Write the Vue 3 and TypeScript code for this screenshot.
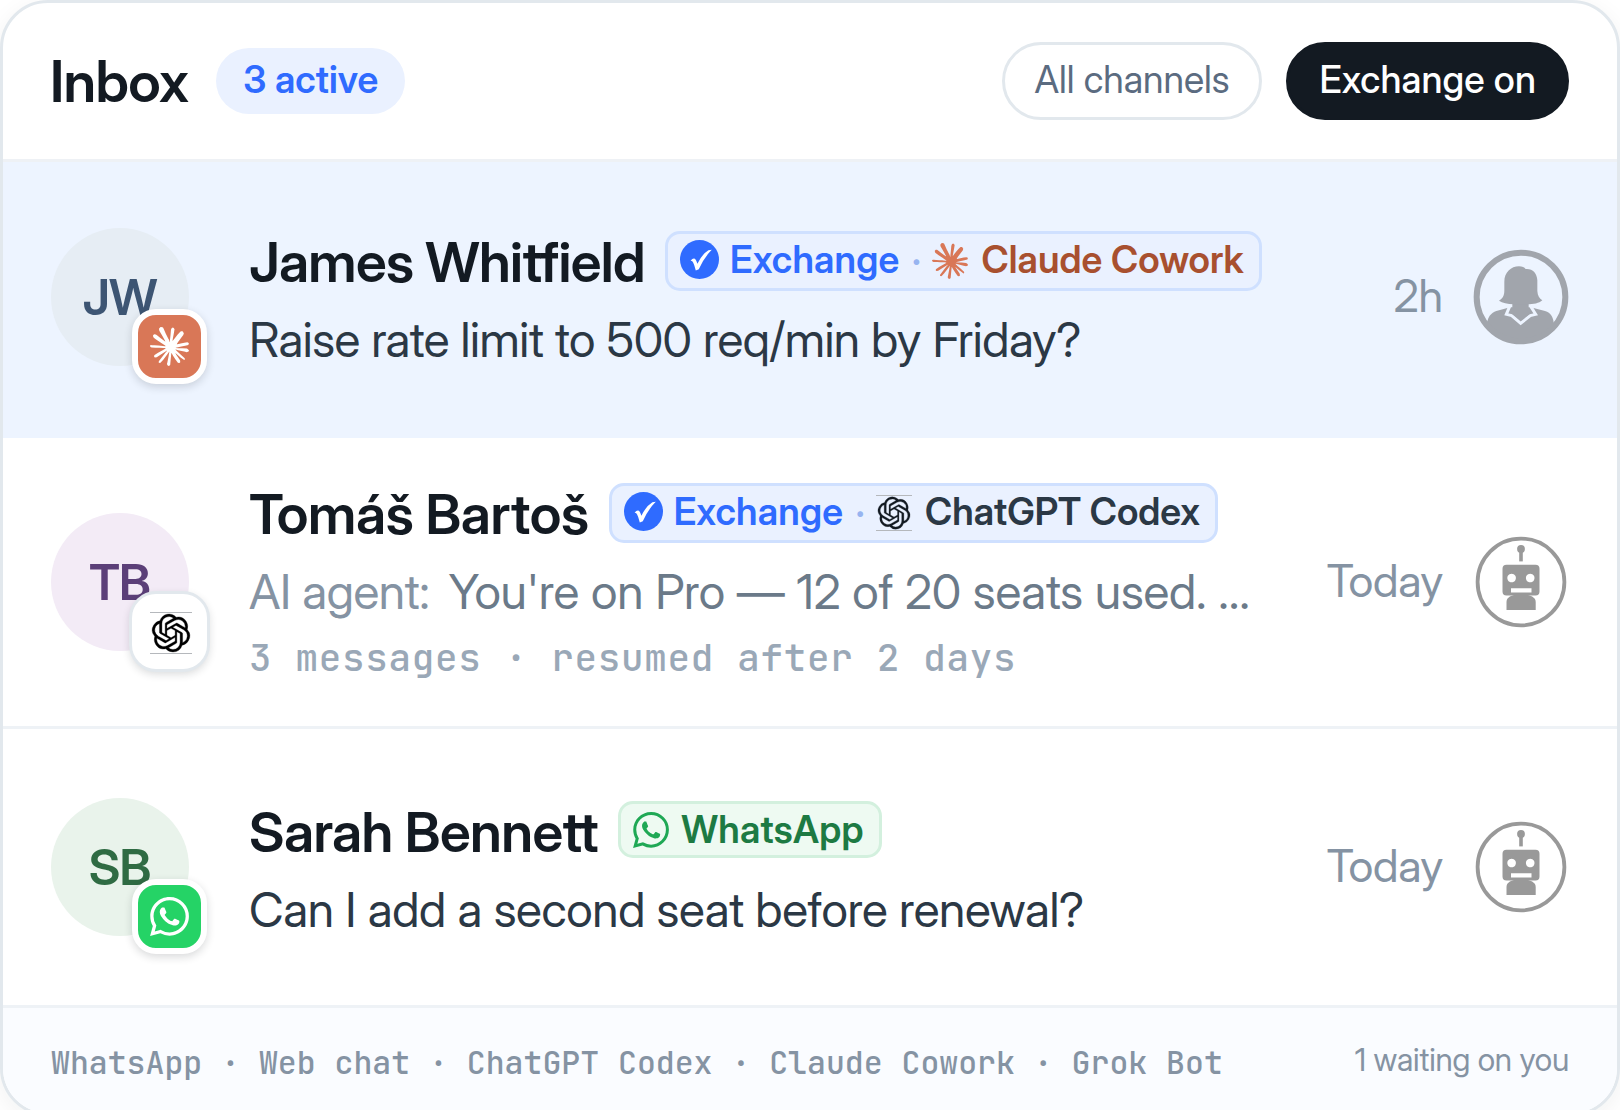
<script setup lang="ts">
type Channel = 'claude' | 'openai' | 'whatsapp'

interface Thread {
  id: number
  initials: string
  tone: string
  name: string
  channel: Channel
  label: string
  exchange: boolean
  sender?: string
  preview: string
  meta?: string
  time: string
  handler: 'human' | 'bot'
  selected?: boolean
}

const icons: Record<Channel, { box: string; d: string }> = {
  claude: {
    box: '0 0 24 24',
    d: 'm4.7144 15.9555 4.7174-2.6471.079-.2307-.079-.1275h-.2307l-.7893-.0486-2.6956-.0729-2.3375-.0971-2.2646-.1214-.5707-.1215-.5343-.7042.0546-.3522.4797-.3218.686.0608 1.5179.1032 2.2767.1578 1.6514.0972 2.4468.255h.3886l.0546-.1579-.1336-.0971-.1032-.0972L6.973 9.8356l-2.55-1.6879-1.3356-.9714-.7225-.4918-.3643-.4614-.1578-1.0078.6557-.7225.8803.0607.2246.0607.8925.686 1.9064 1.4754 2.4893 1.8336.3643.3035.1457-.1032.0182-.0728-.164-.2733-1.3539-2.4467-1.445-2.4893-.6435-1.032-.17-.6194c-.0607-.255-.1032-.4674-.1032-.7285L6.287.1335 6.6997 0l.9957.1336.419.3642.6192 1.4147 1.0018 2.2282 1.5543 3.0296.4553.8985.2429.8318.091.255h.1579v-.1457l.1275-1.706.2368-2.0947.2307-2.6957.0789-.7589.3764-.9107.7468-.4918.5828.2793.4797.686-.0668.4433-.2853 1.8517-.5586 2.9021-.3643 1.9429h.2125l.2429-.2429.9835-1.3053 1.6514-2.0643.7286-.8196.85-.9046.5464-.4311h1.0321l.759 1.1293-.34 1.1657-1.0625 1.3478-.8804 1.1414-1.2628 1.7-.7893 1.36.0729.1093.1882-.0183 2.8535-.607 1.5421-.2794 1.8396-.3157.8318.3886.091.3946-.3278.8075-1.967.4857-2.3072.4614-3.4364.8136-.0425.0304.0486.0607 1.5482.1457.6618.0364h1.621l3.0175.2247.7892.522.4736.6376-.079.4857-1.2142.6193-1.6393-.3886-3.825-.9107-1.3113-.3279h-.1822v.1093l1.0929 1.0686 2.0035 1.8092 2.5075 2.3314.1275.5768-.3218.4554-.34-.0486-2.2039-1.6575-.85-.7468-1.9246-1.621h-.1275v.17l.4432.6496 2.3436 3.5214.1214 1.0807-.17.3521-.6071.2125-.6679-.1214-1.3721-1.9246L14.38 17.959l-1.1414-1.9428-.1397.079-.674 7.2552-.3156.3703-.7286.2793-.6071-.4614-.3218-.7468.3218-1.4753.3886-1.9246.3157-1.53.2853-1.9004.17-.6314-.0121-.0425-.1397.0182-1.4328 1.9672-2.1796 2.9446-1.7243 1.8456-.4128.164-.7164-.3704.0667-.6618.4008-.5889 2.386-3.0357 1.4389-1.882.929-1.0868-.0062-.1579h-.0546l-6.3385 4.1164-1.1293.1457-.4857-.4554.0608-.7467.2307-.2429 1.9064-1.3114Z',
  },
  openai: {
    box: '-.65 -.65 25.3 25.3',
    d: 'M22.2819 9.8211a5.9847 5.9847 0 0 0-.5157-4.9108 6.0462 6.0462 0 0 0-6.5098-2.9A6.0651 6.0651 0 0 0 4.9807 4.1818a5.9847 5.9847 0 0 0-3.9977 2.9 6.0462 6.0462 0 0 0 .7427 7.0966 5.98 5.98 0 0 0 .511 4.9107 6.051 6.051 0 0 0 6.5146 2.9001A5.9847 5.9847 0 0 0 13.2599 24a6.0557 6.0557 0 0 0 5.7718-4.2058 5.9894 5.9894 0 0 0 3.9977-2.9001 6.0557 6.0557 0 0 0-.7475-7.0729zm-9.022 12.6081a4.4755 4.4755 0 0 1-2.8764-1.0408l.1419-.0804 4.7783-2.7582a.7948.7948 0 0 0 .3927-.6813v-6.7369l2.02 1.1686a.071.071 0 0 1 .038.052v5.5826a4.504 4.504 0 0 1-4.4945 4.4944zm-9.6607-4.1254a4.4708 4.4708 0 0 1-.5346-3.0137l.142.0852 4.783 2.7582a.7712.7712 0 0 0 .7806 0l5.8428-3.3685v2.3324a.0804.0804 0 0 1-.0332.0615L9.74 19.9502a4.4992 4.4992 0 0 1-6.1408-1.6464zM2.3408 7.8956a4.485 4.485 0 0 1 2.3655-1.9728V11.6a.7664.7664 0 0 0 .3879.6765l5.8144 3.3543-2.0201 1.1685a.0757.0757 0 0 1-.071 0l-4.8303-2.7865A4.504 4.504 0 0 1 2.3408 7.872zm16.5963 3.8558L13.1038 8.364 15.1192 7.2a.0757.0757 0 0 1 .071 0l4.8303 2.7913a4.4944 4.4944 0 0 1-.6765 8.1042v-5.6772a.79.79 0 0 0-.407-.667zm2.0107-3.0231l-.142-.0852-4.7735-2.7818a.7759.7759 0 0 0-.7854 0L9.409 9.2297V6.8974a.0662.0662 0 0 1 .0284-.0615l4.8303-2.7866a4.4992 4.4992 0 0 1 6.6802 4.66zM8.3065 12.863l-2.02-1.1638a.0804.0804 0 0 1-.038-.0567V6.0742a4.4992 4.4992 0 0 1 7.3757-3.4537l-.142.0805L8.704 5.459a.7948.7948 0 0 0-.3927.6813zm1.0976-2.3654l2.602-1.4998 2.6069 1.4998v2.9994l-2.5974 1.4997-2.6067-1.4997Z',
  },
  whatsapp: {
    box: '0 0 24 24',
    d: 'M17.472 14.382c-.297-.149-1.758-.867-2.03-.967-.273-.099-.471-.148-.67.15-.197.297-.767.966-.94 1.164-.173.199-.347.223-.644.075-.297-.15-1.255-.463-2.39-1.475-.883-.788-1.48-1.761-1.653-2.059-.173-.297-.018-.458.13-.606.134-.133.298-.347.446-.52.149-.174.198-.298.298-.497.099-.198.05-.371-.025-.52-.075-.149-.669-1.612-.916-2.207-.242-.579-.487-.5-.669-.51-.173-.008-.371-.01-.57-.01-.198 0-.52.074-.792.372-.272.297-1.04 1.016-1.04 2.479 0 1.462 1.065 2.875 1.213 3.074.149.198 2.096 3.2 5.077 4.487.709.306 1.262.489 1.694.625.712.227 1.36.195 1.871.118.571-.085 1.758-.719 2.006-1.413.248-.694.248-1.289.173-1.413-.074-.124-.272-.198-.57-.347m-5.421 7.403h-.004a9.87 9.87 0 01-5.031-1.378l-.361-.214-3.741.982.998-3.648-.235-.374a9.86 9.86 0 01-1.51-5.26c.001-5.45 4.436-9.884 9.888-9.884 2.64 0 5.122 1.03 6.988 2.898a9.825 9.825 0 012.893 6.994c-.003 5.45-4.437 9.884-9.885 9.884m8.413-18.297A11.815 11.815 0 0012.05 0C5.495 0 .16 5.335.157 11.892c0 2.096.547 4.142 1.588 5.945L.057 24l6.305-1.654a11.882 11.882 0 005.683 1.448h.005c6.554 0 11.89-5.335 11.893-11.893a11.821 11.821 0 00-3.48-8.413Z',
  },
}

const threads: Thread[] = [
  {
    id: 1,
    initials: 'JW',
    tone: 'slate',
    name: 'James Whitfield',
    channel: 'claude',
    label: 'Claude Cowork',
    exchange: true,
    preview: 'Raise rate limit to 500 req/min by Friday?',
    time: '2h',
    handler: 'human',
    selected: true,
  },
  {
    id: 2,
    initials: 'TB',
    tone: 'plum',
    name: 'Tomáš Bartoš',
    channel: 'openai',
    label: 'ChatGPT Codex',
    exchange: true,
    sender: 'AI agent:',
    preview: "You're on Pro — 12 of 20 seats used. …",
    meta: '3 messages · resumed after 2 days',
    time: 'Today',
    handler: 'bot',
  },
  {
    id: 3,
    initials: 'SB',
    tone: 'green',
    name: 'Sarah Bennett',
    channel: 'whatsapp',
    label: 'WhatsApp',
    exchange: false,
    preview: 'Can I add a second seat before renewal?',
    time: 'Today',
    handler: 'bot',
  },
]

const channels = ['WhatsApp', 'Web chat', 'ChatGPT Codex', 'Claude Cowork', 'Grok Bot'].join(' · ')
</script>

<template>
  <div class="stage">
    <section class="card">
      <header class="head">
        <h1 class="title">Inbox</h1>
        <span class="count">3 active</span>
        <div class="filters">
          <button class="pill">All channels</button>
          <button class="pill pill-dark">Exchange on</button>
        </div>
      </header>

      <article
        v-for="t in threads"
        :key="t.id"
        class="row"
        :class="['via-' + t.channel, { selected: t.selected }]"
      >
        <div class="avatar" :class="t.tone">
          <span class="initials">{{ t.initials }}</span>
          <span class="badge" :class="t.channel">
            <svg class="glyph" :viewBox="icons[t.channel].box"><path :d="icons[t.channel].d" /></svg>
          </span>
        </div>

        <div class="body">
          <div class="line">
            <span class="name">{{ t.name }}</span>
            <span class="tag" :class="'tag-' + t.channel">
              <template v-if="t.exchange">
                <svg class="check" viewBox="0 0 39 39">
                  <circle cx="19.5" cy="19.5" r="19.5" />
                  <path d="M10.6 20.8Q12.4 18.4 14.2 18.6Q16 19.2 17.4 23.8Q22 14.2 28.4 10.2L31.8 9.8Q23.8 17.8 18.8 29.2L15.8 30.4Q14.4 24.6 13 22.2Q12.2 20.8 10.6 20.8Z" />
                </svg>
                <span class="exchange">Exchange</span>
                <span class="dot">·</span>
              </template>
              <svg class="glyph" :viewBox="icons[t.channel].box"><path :d="icons[t.channel].d" /></svg>
              <span class="label">{{ t.label }}</span>
            </span>
          </div>
          <p class="preview" :class="{ muted: t.sender }">
            <span v-if="t.sender" class="sender">{{ t.sender }}</span>{{ t.preview }}
          </p>
          <p v-if="t.meta" class="meta">{{ t.meta }}</p>
        </div>

        <time class="time">{{ t.time }}</time>

        <svg v-if="t.handler === 'human'" class="handler" viewBox="-2 -2 288 288">
          <defs>
            <clipPath id="disc"><circle cx="142" cy="142" r="140" /></clipPath>
          </defs>
          <g fill="#a1a5ac">
            <g clip-path="url(#disc)">
              <path d="M40 284V219C44 200 52 190 68 184L112 172H168L214 184C232 190 238 202 240 219V284Z" />
            </g>
            <path d="M109 168L98 194L114 198L141 221L170 198L186 194L170 168Z" fill="none" stroke="#edf4ff" stroke-width="9" />
            <path d="M116 150H165V175L172 190L141 212L111 190L116 175Z" />
            <path d="M92 96C92 68 112 50 136 50C146 50 152 53 156 58C176 56 190 70 191 92V124C192 138 197 147 206 152C196 161 180 164 160 164H120C102 163 86 160 76 153C88 146 92 138 92 122Z" />
          </g>
          <circle cx="142" cy="142" r="133" fill="none" stroke="#a1a5ac" stroke-width="18" />
        </svg>
        <svg v-else class="handler" viewBox="0 0 96 96">
          <circle cx="48" cy="48" r="43.4" fill="none" stroke="#999" stroke-width="3.8" />
          <g fill="#999">
            <circle cx="48" cy="15" r="3.9" />
            <path d="M46.2 15h3.6v12.4h-3.6z" />
            <path fill-rule="evenodd" d="M33.5 30.8H62.5A4 4 0 0 1 66.5 34.8V57.5A4 4 0 0 1 62.5 61.5H33.5A4 4 0 0 1 29.5 57.5V34.8A4 4 0 0 1 33.5 30.8ZM38.6 39.7a4.3 4.3 0 1 0 .01 0ZM57.2 39.7a4.3 4.3 0 1 0 .01 0ZM38 54.3V58.5H58.5V54.3Z" />
            <path d="M33.5 76V68C33.5 64 37 62 41 61H55C59 62 62.7 64 62.7 68V76Z" />
          </g>
        </svg>
      </article>

      <footer class="foot">
        <span class="channels">{{ channels }}</span>
        <span class="waiting">1 waiting on you</span>
      </footer>
    </section>
  </div>
</template>

<style>
body {
  background: #fff;
}
</style>

<style scoped>
.stage {
  width: 1620px;
  height: 1110px;
  overflow: hidden;
  font-family: "Inter Display", Inter, "Liberation Sans", sans-serif;
  color: #131a22;
}
.card {
  box-sizing: border-box;
  height: 1116px;
  border: 3px solid #e2e8ed;
  border-radius: 48px;
  background: #fff;
  box-shadow: 0 6px 24px rgba(19, 26, 34, 0.06);
  overflow: hidden;
  display: flex;
  flex-direction: column;
}
.head {
  box-sizing: border-box;
  height: 159px;
  flex: none;
  padding: 0 48px;
  border-bottom: 3px solid #eef1f5;
  display: flex;
  align-items: center;
}
.title {
  margin: 2px 0 0 -1px;
  font-size: 57px;
  line-height: 66px;
  font-weight: 600;
  letter-spacing: -0.012em;
}
.count {
  margin-left: 28px;
  height: 66px;
  line-height: 64px;
  padding: 0 27px;
  border-radius: 33px;
  background: #eaf1ff;
  color: #2f6bff;
  font-size: 37.5px;
  font-weight: 600;
  letter-spacing: 0.1px;
}
.filters {
  margin-left: auto;
  display: flex;
  gap: 24px;
}
.pill {
  box-sizing: border-box;
  height: 78px;
  padding: 0 30px 2px;
  border: 3px solid #e2e8ed;
  border-radius: 39px;
  background: #fff;
  color: #5b6b80;
  font: 400 37.5px/70px "Inter Display", Inter, "Liberation Sans", sans-serif;
  letter-spacing: -0.05px;
}
.pill-dark {
  background: #131a22;
  border-color: #131a22;
  color: #fff;
  font-weight: 500;
  letter-spacing: 0.1px;
}
.row {
  box-sizing: border-box;
  height: 276px;
  flex: none;
  padding: 0 48px;
  display: flex;
  align-items: center;
}
.row.selected {
  background: #edf4ff;
  padding-bottom: 6px;
}
.row:nth-of-type(2) {
  height: 291px;
  border-bottom: 3px solid #eef2f6;
}
.avatar {
  position: relative;
  width: 138px;
  height: 138px;
  flex: none;
  border-radius: 50%;
  display: flex;
  align-items: center;
  justify-content: center;
  font-size: 49.5px;
  font-weight: 600;
  letter-spacing: -0.02em;
}
.initials { margin-right: 1px; }
.slate { background: #e6edf4; color: #3d5573; }
.plum { background: #f3ebf6; color: #5b3f78; }
.green { background: #e9f3eb; color: #2f6b43; }
.badge {
  position: absolute;
  right: -18px;
  bottom: -18px;
  box-sizing: border-box;
  width: 75px;
  height: 75px;
  border: 6px solid #fff;
  border-radius: 24px;
  display: flex;
  align-items: center;
  justify-content: center;
  box-shadow: 0 3px 9px rgba(19, 26, 34, 0.16);
}
.badge .glyph { width: 39px; height: 39px; fill: #fff; }
.badge.claude { background: #d97757; }
.badge.whatsapp { background: #25d366; }
.badge.openai {
  background: #fff;
  box-shadow: 0 0 0 3px #e2e8ed, 0 3px 9px 2px rgba(19, 26, 34, 0.16);
}
.badge.openai .glyph { width: 42px; height: 42px; margin: 2px 0 0 2px; fill: #000; stroke: #000; }
.openai .glyph, .tag-openai .glyph {
  box-sizing: border-box;
  border-top: 1px solid #b5b8bc;
  border-bottom: 1px solid #b5b8bc;
  stroke-width: 0.2;
}
.body {
  margin-left: 60px;
  flex: 1;
  min-width: 0;
}
.line {
  height: 70px;
  display: flex;
  align-items: center;
}
.name {
  margin-bottom: 2px;
  font-size: 55.5px;
  line-height: 70px;
  font-weight: 600;
  letter-spacing: -0.01em;
  white-space: nowrap;
}
.via-claude .name { letter-spacing: -0.012em; }
.via-openai .name { letter-spacing: -0.006em; }
.tag {
  box-sizing: border-box;
  height: 60px;
  margin: 0 0 3px 20px;
  padding: 0 15px 0 12px;
  border: 3px solid #cfe0ff;
  border-radius: 15px;
  background: #eaf1ff;
  display: flex;
  align-items: center;
  font-size: 37.5px;
  line-height: 51px;
  font-weight: 600;
  white-space: nowrap;
}
.tag .glyph { width: 36px; height: 36px; flex: none; }
.check { width: 39px; height: 39px; flex: none; margin-bottom: 3px; fill: #2f6bff; }
.check path { fill: #fff; }
.exchange { margin: 0 0 3px 11px; letter-spacing: 0.2px; color: #2f6bff; }
.dot {
  box-sizing: border-box;
  width: 33px;
  padding-left: 1px;
  text-align: center;
  color: #97b4f0;
}
.label { margin: 0 0 3px 13px; letter-spacing: 0.1px; }
.tag-claude .glyph { fill: #d97757; }
.tag-claude .label { color: #a8502f; }
.tag-openai .glyph { fill: #131a22; stroke: #131a22; }
.tag-openai .label { letter-spacing: 0; color: #2b3845; }
.tag-whatsapp {
  height: 57px;
  margin-bottom: 6px;
  background: #eefaf2;
  border-color: #d3f0de;
}
.tag-whatsapp .glyph { fill: #1fa855; }
.tag-whatsapp .label { margin: 0 0 0 12px; letter-spacing: 0.3px; color: #1d7a43; }
.preview {
  margin: 15px 0 0;
  font-size: 48px;
  line-height: 54px;
  letter-spacing: -0.01em;
  color: #2b3845;
  white-space: nowrap;
}
.preview.muted { color: #6b7a89; letter-spacing: -0.15px; }
.via-whatsapp .preview { letter-spacing: -0.35px; }
.sender { color: #8593a3; margin-right: 19px; letter-spacing: -0.4px; }
.meta {
  margin: 14px 0 2px;
  font: 500 37.5px/50px "JetBrains Mono", "DejaVu Sans Mono", monospace;
  letter-spacing: 0.02em;
  color: #9aa8b7;
  white-space: nowrap;
}
.time {
  margin-bottom: 2px;
  font-size: 45px;
  line-height: 54px;
  letter-spacing: -0.2px;
  color: #8593a3;
}
.handler {
  width: 96px;
  height: 96px;
  margin-left: 30px;
  flex: none;
}
.foot {
  flex: 1;
  box-sizing: border-box;
  padding: 0 48px 2px;
  border-top: 3px solid #eef2f6;
  background: #fafcff;
  display: flex;
  align-items: center;
  justify-content: space-between;
  color: #8593a3;
  white-space: nowrap;
}
.channels {
  margin-top: 7px;
  font: 500 31.5px/42px "JetBrains Mono", "DejaVu Sans Mono", monospace;
}
.waiting {
  font-size: 31.5px;
  line-height: 42px;
  letter-spacing: -0.2px;
}
</style>
